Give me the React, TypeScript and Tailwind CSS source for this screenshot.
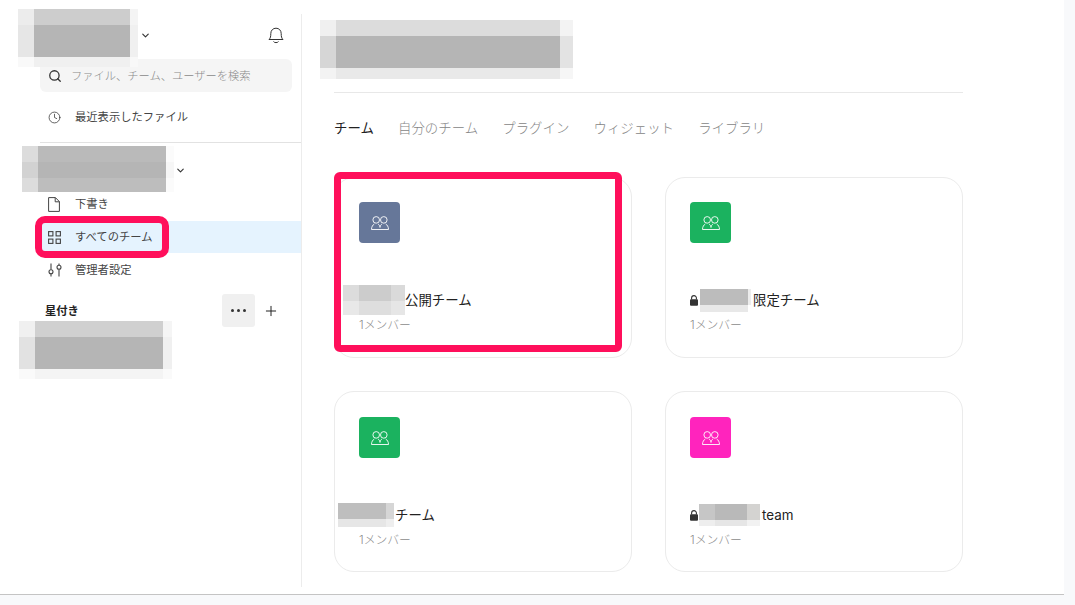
import { ChevronDown, Clock, Plus, Search } from "lucide-react";

const FONT = "font-['Inter','Noto_Sans_CJK_JP',sans-serif]";

// Pixelated redaction block, laid over whatever is underneath
const Mosaic = ({ className, cells }: { className: string; cells: string[] }) => (
  <div className={`absolute grid ${className}`}>
    {cells.map((c, i) => (
      <div key={i} className={c} />
    ))}
  </div>
);

const TeamIcon = () => (
  <svg width="18" height="14" viewBox="0 0 18 14" fill="none" stroke="white" strokeWidth="0.9">
    <circle cx="5.2" cy="3.9" r="3.3" />
    <circle cx="12.8" cy="3.9" r="3.3" />
    <path d="M0.5 13.5 C0.5 10.6 1.8 9 3.3 8 M7.1 8 C8.2 8.9 9 10 9 11.4 C9 10 9.8 8.9 10.9 8 M14.7 8 C16.2 9 17.5 10.6 17.5 13.5 M0.5 13.5 H17.5" />
  </svg>
);

const Lock = () => (
  <svg width="8" height="11" viewBox="0 0 8 11" className="shrink-0 mr-[2px]">
    <path d="M1.6 4.5 V3 a2.4 2.4 0 0 1 4.8 0 V4.5" fill="none" stroke="#333" strokeWidth="1.1" />
    <rect x="0" y="4.2" width="8" height="6.6" rx="1" fill="#333" />
  </svg>
);

const Bell = () => (
  <svg width="16" height="17" viewBox="0 0 16 17" fill="none" stroke="#333" strokeWidth="1">
    <path d="M1 12.5 C2.5 11 2.8 9.5 2.8 6.5 C2.8 3.4 5 1.2 8 1.2 C11 1.2 13.2 3.4 13.2 6.5 C13.2 9.5 13.5 11 15 12.5 Z" />
    <path d="M5.5 14.5 C6.3 16 9.7 16 10.5 14.5" />
  </svg>
);

const FileIcon = () => (
  <svg width="12" height="15" viewBox="0 0 12 15" fill="none" stroke="#444" strokeWidth="1">
    <path d="M0.6 0.6 H7.4 L11.4 4.6 V14.4 H0.6 Z M7.2 0.6 V4.8 H11.4" />
  </svg>
);

const GridIcon = () => (
  <svg width="13" height="13" viewBox="0 0 13 13" fill="none" stroke="#444" strokeWidth="1.1">
    <rect x="0.6" y="0.6" width="4.3" height="4.3" />
    <rect x="8.1" y="0.6" width="4.3" height="4.3" />
    <rect x="0.6" y="8.1" width="4.3" height="4.3" />
    <rect x="8.1" y="8.1" width="4.3" height="4.3" />
  </svg>
);

const SlidersIcon = () => (
  <svg width="14" height="14" viewBox="0 0 14 14" fill="none" stroke="#444" strokeWidth="1.1">
    <path d="M3 0.5 V6.5 M3 11 V13.5 M11 0.5 V2 M11 6.5 V13.5" />
    <circle cx="3" cy="8.8" r="2" />
    <circle cx="11" cy="4.2" r="2" />
  </svg>
);

const NavRow = ({ icon, label, active }: { icon: React.ReactNode; label: string; active?: boolean }) => (
  <div className={`flex items-center h-[32px] ${active ? "bg-[#e5f3fe]" : ""}`}>
    <div className="w-[35px] pl-[8px] flex items-center">{icon}</div>
    <span className="text-[11.3px] text-[#444]">{label}</span>
  </div>
);

const TeamCard = ({
  color,
  gap,
  lock,
  name,
  top,
}: {
  color: string;
  gap: string;
  lock?: boolean;
  name: string;
  top: string;
}) => (
  <div className={`h-[181px] rounded-[20px] border border-[#ebebeb] pl-[24px] ${top}`}>
    <div className={`w-[41px] h-[41px] rounded-[4px] flex items-center justify-center ${color}`}>
      <TeamIcon />
    </div>
    <div className="mt-[47px] h-[20px] flex items-center text-[13.4px] text-[#222]">
      {lock && <Lock />}
      <span className={`inline-block ${gap}`} />
      {name}
    </div>
    <div className="mt-[6px] h-[18px] leading-[18px] text-[11.8px] font-light text-[#8c8c8c]">1メンバー</div>
  </div>
);

export default function App() {
  const tabs = ["自分のチーム", "プラグイン", "ウィジェット", "ライブラリ"];

  return (
    <div className={`relative w-[1075px] h-[605px] overflow-hidden bg-[#f8f9fb] ${FONT}`}>
      <div className="w-[1064px] h-[595px] bg-white border-b border-[#c4c4c4] flex">
        {/* Sidebar */}
        <aside className="w-[302px] mt-[14px] h-[573px] border-r border-[#ececec] pl-[40px] shrink-0">
          <div className="h-[42px] flex items-center justify-between pr-[17px]">
            <ChevronDown size={11} className="ml-[100px] text-[#333]" strokeWidth={2.5} />
            <Bell />
          </div>
          <div className="mt-[3px] mr-[9px] h-[33px] rounded-[6px] bg-[#f5f5f5] flex items-center pl-[8px] gap-[9px]">
            <Search size={14} className="text-[#333]" strokeWidth={2.2} />
            <span className="text-[11.25px] font-light text-[#8a8a8a] translate-y-[1px]">ファイル、チーム、ユーザーを検索</span>
          </div>
          <div className="mt-[9px]">
            <NavRow icon={<Clock size={13} className="text-[#333]" strokeWidth={1.4} />} label="最近表示したファイル" />
          </div>
          <div className="mt-[9px] h-px bg-[#e2e2e2]" />
          <div className="h-[45px] pt-[10px] flex items-center">
            <ChevronDown size={11} className="ml-[135px] text-[#333]" strokeWidth={2.5} />
          </div>
          <div className="flex flex-col gap-px">
            <NavRow icon={<FileIcon />} label="下書き" />
            <NavRow icon={<GridIcon />} label="すべてのチーム" active />
            <NavRow icon={<SlidersIcon />} label="管理者設定" />
          </div>
          <div className="mt-[8px] h-[33px] flex items-center pl-[5px]">
            <span className="w-[177px] text-[11.3px] font-bold text-[#222] translate-y-[1px]">星付き</span>
            <div className="w-[33px] h-[33px] rounded-[3px] bg-[#f0f0f0] flex items-center justify-center gap-[3px]">
              <span className="w-[3px] h-[3px] rounded-full bg-[#333]" />
              <span className="w-[3px] h-[3px] rounded-full bg-[#333]" />
              <span className="w-[3px] h-[3px] rounded-full bg-[#333]" />
            </div>
            <Plus size={16} className="ml-[8px] text-[#222]" strokeWidth={1.5} />
          </div>
        </aside>

        {/* Main */}
        <main className="pl-[32px] w-[661px]">
          <div className="h-[93px] border-b border-[#e8e8e8]" />
          <div className="h-[70px] flex items-center gap-[24.3px] text-[13.4px] text-[#858585] font-light">
            <span className="text-[#222] font-normal">チーム</span>
            {tabs.map((t) => (
              <span key={t}>{t}</span>
            ))}
          </div>
          <div className="mt-[14px] grid grid-cols-[298px_298px] gap-x-[33px] gap-y-[33px]">
            <TeamCard top="pt-[24px]" color="bg-[#667799]" gap="w-[46px]" name="公開チーム" />
            <TeamCard top="pt-[24px]" color="bg-[#1bb25f]" gap="w-[53px]" lock name="限定チーム" />
            <TeamCard top="pt-[25px]" color="bg-[#1bb25f]" gap="w-[36px]" name="チーム" />
            <TeamCard top="pt-[25px]" color="bg-[#ff24bd]" gap="w-[62px]" lock name="team" />
          </div>
        </main>
      </div>

      {/* Redactions */}
      <Mosaic
        className="left-[18px] top-[9px] grid-cols-[16px_96px_8px] grid-rows-[16px_32px_10px]"
        cells={["bg-[#ececec]", "bg-[#cdcdcd]", "bg-[#f4f4f4]", "bg-[#e6e6e6]", "bg-[#b5b5b5]", "bg-[#f0f0f0]", "bg-[#f9f9f9]", "bg-[#f0f0f0]", "bg-[#f8f8f8]"]}
      />
      <Mosaic
        className="left-[22px] top-[146px] grid-cols-[16px_128px_8px] grid-rows-[16px_16px_14px]"
        cells={["bg-[#dcdcdc]", "bg-[#bababa]", "bg-[#fbfbfb]", "bg-[#d2d2d2]", "bg-[#b5b5b5]", "bg-[#f6f6f6]", "bg-[#dcdcdc]", "bg-[#bdbdbd]", "bg-[#fbfbfb]"]}
      />
      <Mosaic
        className="left-[19px] top-[321px] grid-cols-[16px_128px_9px] grid-rows-[16px_32px_10px]"
        cells={["bg-[#f0f0f0]", "bg-[#d0d0d0]", "bg-[#f5f5f5]", "bg-[#e2e2e2]", "bg-[#b5b5b5]", "bg-[#f0f0f0]", "bg-[#fafafa]", "bg-[#f4f4f4]", "bg-[#fafafa]"]}
      />
      <Mosaic
        className="left-[320px] top-[20px] grid-cols-[16px_224px_13px] grid-rows-[16px_32px_11px]"
        cells={["bg-[#f0f0f0]", "bg-[#dcdcdc]", "bg-[#f3f3f3]", "bg-[#d6d6d6]", "bg-[#b5b5b5]", "bg-[#e3e3e3]", "bg-[#f3f3f3]", "bg-[#e9e9e9]", "bg-[#f6f6f6]"]}
      />
      <Mosaic
        className="left-[343px] top-[285px] grid-cols-[16px_32px_14px] grid-rows-[16px_14px]"
        cells={["bg-[#dcdcdc]", "bg-[#cccccc]", "bg-[#dadada]", "bg-[#e8e8e8]", "bg-[#dedede]", "bg-[#e6e6e6]"]}
      />
      <Mosaic
        className="left-[700px] top-[289px] grid-cols-[48px_3px] grid-rows-[16px_7px]"
        cells={["bg-[#bcbcbc]", "bg-[#ececec]", "bg-[#e8e8e8]", "bg-white"]}
      />
      <Mosaic
        className="left-[338px] top-[503px] grid-cols-[48px_8px] grid-rows-[16px_8px]"
        cells={["bg-[#bebebe]", "bg-[#d6d6d6]", "bg-[#e6e6e6]", "bg-[#eeeeee]"]}
      />
      <Mosaic
        className="left-[699px] top-[504px] grid-cols-[16px_32px_13px] grid-rows-[16px_6px]"
        cells={["bg-[#c6c6c6]", "bg-[#b9b9b9]", "bg-[#d4d3d1]", "bg-[#eeeeee]", "bg-[#e6e6e6]", "bg-[#f2f2f2]"]}
      />

      {/* Red annotation frames */}
      <div className="absolute left-[35px] top-[216px] w-[134px] h-[42px] rounded-[10px] border-[7px] border-[#ff0f5b]" />
      <div className="absolute left-[334px] top-[172px] w-[288px] h-[180px] rounded-[6px] border-[7px] border-[#ff0f5b]" />
    </div>
  );
}
